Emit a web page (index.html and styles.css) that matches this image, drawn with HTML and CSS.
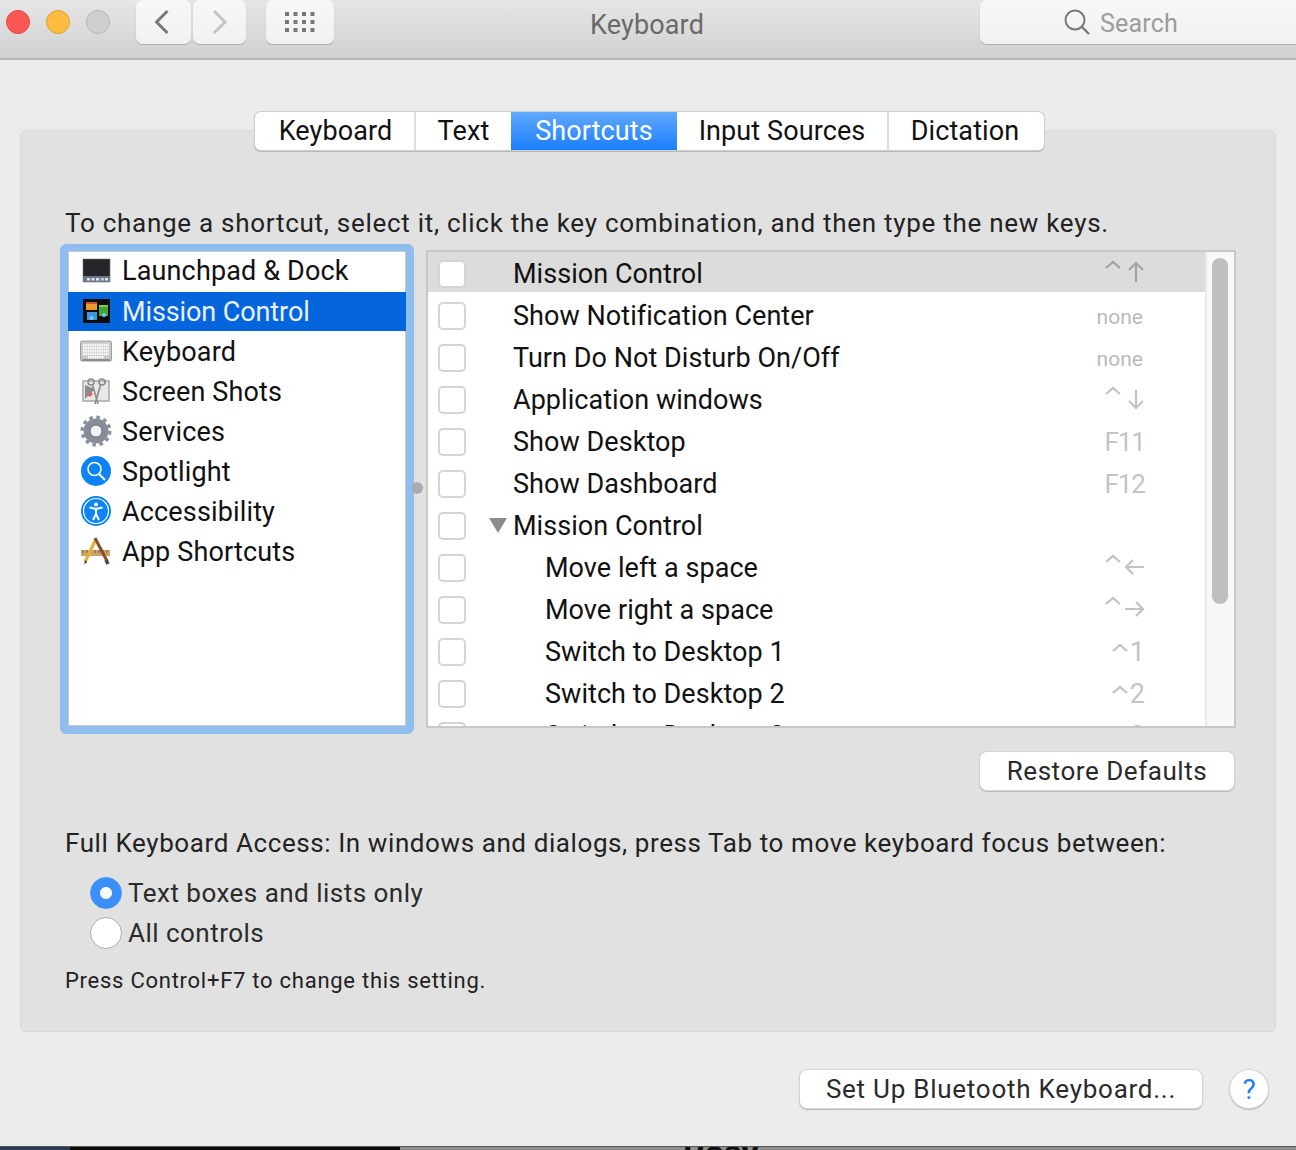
FILE: index.html
```html
<!DOCTYPE html>
<html lang="en">
<head>
<meta charset="utf-8">
<title>Keyboard</title>
<link rel="stylesheet" href="styles.css">
</head>
<body>
<div class="window">
  <header class="titlebar">
    <div class="lights">
      <span class="light red"></span><span class="light yellow"></span><span class="light grey"></span>
    </div>
    <div class="navgroup">
      <span class="tbtn nav"><svg width="18" height="26" viewBox="0 0 18 26"><path d="M12.500 2 1.500 13l11 11" fill="none" stroke="#777" stroke-width="3"/></svg></span>
      <span class="tbtn nav"><svg width="18" height="26" viewBox="0 0 18 26"><path d="M3 2l11 11L3 24" fill="none" stroke="#c4c4c4" stroke-width="3"/></svg></span>
    </div>
    <span class="tbtn grid-btn"><svg width="30" height="20" viewBox="0 0 30 20" fill="#777"><rect x="0" y="0" width="4" height="4"/><rect x="8.500" y="0" width="4" height="4"/><rect x="17" y="0" width="4" height="4"/><rect x="25.500" y="0" width="4" height="4"/><rect x="0" y="8" width="4" height="4"/><rect x="8.500" y="8" width="4" height="4"/><rect x="17" y="8" width="4" height="4"/><rect x="25.500" y="8" width="4" height="4"/><rect x="0" y="16" width="4" height="4"/><rect x="8.500" y="16" width="4" height="4"/><rect x="17" y="16" width="4" height="4"/><rect x="25.500" y="16" width="4" height="4"/></svg></span>
    <div class="title">Keyboard</div>
    <div class="search">
      <svg width="26" height="26" viewBox="0 0 26 26"><circle cx="11" cy="11" r="9.500" fill="none" stroke="#777" stroke-width="2"/><path d="M18 18l7 7" stroke="#777" stroke-width="2.400"/></svg>
      <span>Search</span>
    </div>
  </header>

  <main class="content">
    <nav class="tabs">
      <span class="tab t1">Keyboard</span><span class="tab t2">Text</span><span class="tab t3 active">Shortcuts</span><span class="tab t4">Input Sources</span><span class="tab t5">Dictation</span>
    </nav>
    <section class="panel">
      <p class="intro">To change a shortcut, select it, click the key combination, and then type the new keys.</p>
      <div class="columns">
        <div class="cats">
          <div class="cat">
            <svg class="ico" width="32" height="28" viewBox="0 0 32 28"><rect x="3" y="2" width="27" height="23" fill="#26262a" stroke="#777" stroke-width=".6"/><rect x="3" y="19" width="27" height="6" fill="#6d7783"/><g fill="#dde7f2"><rect x="7" y="21" width="3" height="2.500"/><rect x="11.500" y="21" width="3" height="2.500"/><rect x="16" y="21" width="3" height="2.500"/><rect x="20.500" y="21" width="3.500" height="2.500" fill="#a8cdf0"/><rect x="25" y="21" width="3" height="2.500"/></g></svg>
            <span>Launchpad &amp; Dock</span>
          </div>
          <div class="cat selected">
            <svg class="ico" width="32" height="28" viewBox="0 0 32 28"><rect x="3" y="1" width="27" height="24" fill="#0d0d0d"/><rect x="6" y="4" width="11" height="8" fill="#e89a2c"/><rect x="6" y="4" width="11" height="2" fill="#d24f2f"/><rect x="7" y="14" width="10" height="8" fill="#3d94e0"/><rect x="19" y="7" width="9" height="11" fill="#3fa63a"/><rect x="19" y="7" width="9" height="2" fill="#7ccb4d"/><circle cx="11.500" cy="20" r="2" fill="#7fc7f5"/><circle cx="24" cy="17" r="2" fill="#7fc7f5"/></svg>
            <span>Mission Control</span>
          </div>
          <div class="cat">
            <svg class="ico" width="32" height="28" viewBox="0 0 32 28"><rect x="0.500" y="4" width="31" height="20" rx="1.500" fill="#c9c9c9" stroke="#9d9d9d"/><rect x="2" y="22" width="28" height="2" fill="#8d8d8d"/><g stroke="#fafafa" stroke-width="2.500" stroke-dasharray="1.700 .6"><path d="M3 8h26M3 11h26M3 14h26M3 17h26"/><path d="M8 20.300h16"/></g></svg>
            <span>Keyboard</span>
          </div>
          <div class="cat">
            <svg class="ico" width="32" height="28" viewBox="0 0 32 28"><rect x="3" y="4" width="26" height="20" fill="#e8e8e8" stroke="#a8a8a8" stroke-width="1.500"/><path d="M5 22 15 12 5 8z" fill="#8c8c8c"/><path d="M7 18l4-3 2 2-3 3z" fill="#d36a5d"/><g fill="none" stroke="#8b8b8b" stroke-width="1.600"><circle cx="11" cy="5" r="3"/><circle cx="22" cy="5" r="3"/><path d="M12.500 8l5.500 19M20.500 8 15 27"/></g></svg>
            <span>Screen Shots</span>
          </div>
          <div class="cat">
            <svg class="ico" width="32" height="32" viewBox="0 0 32 32"><circle cx="16" cy="16" r="9" fill="none" stroke="#868d97" stroke-width="7"/><circle cx="16" cy="16" r="13" fill="none" stroke="#8b929c" stroke-width="5" stroke-dasharray="3.400 3.400"/><circle cx="16" cy="16" r="6" fill="#f2f2f2" stroke="#6a7079"/></svg>
            <span>Services</span>
          </div>
          <div class="cat">
            <svg class="ico" width="32" height="32" viewBox="0 0 32 32"><circle cx="16" cy="16" r="15" fill="#0d84f5"/><circle cx="14.500" cy="14" r="6.500" fill="none" stroke="#fff" stroke-width="1.500"/><path d="M19 19l6 6" stroke="#fff" stroke-width="2"/></svg>
            <span>Spotlight</span>
          </div>
          <div class="cat">
            <svg class="ico" width="32" height="32" viewBox="0 0 32 32"><circle cx="16" cy="16" r="15" fill="#0d84f5"/><circle cx="16" cy="16" r="12.500" fill="none" stroke="#fff" stroke-width="1.200"/><circle cx="16" cy="9.500" r="2" fill="#fff"/><path d="M9.500 12.500 16 14l6.500-1.500M16 14v5l-3 6M16 19l3 6" fill="none" stroke="#fff" stroke-width="2"/></svg>
            <span>Accessibility</span>
          </div>
          <div class="cat">
            <svg class="ico" width="32" height="32" viewBox="0 0 32 32"><rect x="1" y="15" width="29" height="6" fill="#c9a468"/><path d="M3 15v3M7 15v3M11 15v3M15 15v3M19 15v3M23 15v3M27 15v3" stroke="#7d6238"/><path d="M16 4 5 27" stroke="#e6ae3c" stroke-width="3.200"/><path d="M5.500 25l-1.500 4 3-1.500z" fill="#333"/><path d="M15 3l12 23" stroke="#8a4b33" stroke-width="3"/><path d="M26 25l2 4" stroke="#444" stroke-width="3.500"/></svg>
            <span>App Shortcuts</span>
          </div>
        </div>
        <span class="divider-knob"></span>
        <div class="table">
          <div class="rows">
            <div class="row hl"><span class="check"></span><span class="disc"></span><span class="label">Mission Control</span><span class="keys"><svg class="arrows" width="40" height="24" viewBox="0 0 40 24"><path d="M1 8l7-6 7 6M31 22V4M24 10l7-7 7 7" fill="none" stroke="#a3a3a3" stroke-width="2.200"/></svg></span></div>
            <div class="row"><span class="check"></span><span class="disc"></span><span class="label">Show Notification Center</span><span class="keys small">none</span></div>
            <div class="row"><span class="check"></span><span class="disc"></span><span class="label">Turn Do Not Disturb On/Off</span><span class="keys small">none</span></div>
            <div class="row"><span class="check"></span><span class="disc"></span><span class="label">Application windows</span><span class="keys"><svg class="arrows" width="40" height="24" viewBox="0 0 40 24"><path d="M1 8l7-6 7 6M31 4v18M24 15l7 7 7-7" fill="none" stroke="#c2c2c2" stroke-width="2.200"/></svg></span></div>
            <div class="row"><span class="check"></span><span class="disc"></span><span class="label">Show Desktop</span><span class="keys fn">F11</span></div>
            <div class="row"><span class="check"></span><span class="disc"></span><span class="label">Show Dashboard</span><span class="keys fn">F12</span></div>
            <div class="row"><span class="check"></span><span class="disc"><svg width="18" height="15" viewBox="0 0 18 15"><path d="M0 0h18L9 15z" fill="#8b8b8b"/></svg></span><span class="label">Mission Control</span><span class="keys"></span></div>
            <div class="row sub"><span class="check"></span><span class="disc"></span><span class="label">Move left a space</span><span class="keys"><svg class="arrows" width="40" height="24" viewBox="0 0 40 24"><path d="M1 8l7-6 7 6M21 13h18M28 6l-7 7 7 7" fill="none" stroke="#c2c2c2" stroke-width="2.200"/></svg></span></div>
            <div class="row sub"><span class="check"></span><span class="disc"></span><span class="label">Move right a space</span><span class="keys"><svg class="arrows" width="40" height="24" viewBox="0 0 40 24"><path d="M1 8l7-6 7 6M20 13h18M31 6l7 7-7 7" fill="none" stroke="#c2c2c2" stroke-width="2.200"/></svg></span></div>
            <div class="row sub"><span class="check"></span><span class="disc"></span><span class="label">Switch to Desktop 1</span><span class="keys"><svg class="caret" width="16" height="10" viewBox="0 0 16 10"><path d="M1 8l7-6 7 6" fill="none" stroke="#c2c2c2" stroke-width="2.200"/></svg>1</span></div>
            <div class="row sub"><span class="check"></span><span class="disc"></span><span class="label">Switch to Desktop 2</span><span class="keys"><svg class="caret" width="16" height="10" viewBox="0 0 16 10"><path d="M1 8l7-6 7 6" fill="none" stroke="#c2c2c2" stroke-width="2.200"/></svg>2</span></div>
            <div class="row sub"><span class="check"></span><span class="disc"></span><span class="label">Switch to Desktop 3</span><span class="keys"><svg class="caret" width="16" height="10" viewBox="0 0 16 10"><path d="M1 8l7-6 7 6" fill="none" stroke="#c2c2c2" stroke-width="2.200"/></svg>3</span></div>
          </div>
          <div class="track"><div class="thumb"></div></div>
        </div>
      </div>
      <div class="restore-row"><span class="btn restore">Restore Defaults</span></div>
      <p class="fka">Full Keyboard Access: In windows and dialogs, press Tab to move keyboard focus between:</p>
      <div class="radios">
        <div class="radio-row"><span class="radio on"></span><span>Text boxes and lists only</span></div>
        <div class="radio-row"><span class="radio"></span><span>All controls</span></div>
      </div>
      <p class="hint">Press Control+F7 to change this setting.</p>
    </section>
    <div class="footer">
      <span class="btn bt">Set Up Bluetooth Keyboard...</span>
      <span class="help">?</span>
    </div>
  </main>
  <div class="behind"><span>Rosy</span></div>
</div>
</body>
</html>
```

FILE: styles.css
```css
* { box-sizing: border-box; }
html, body { margin: 0; padding: 0; }
body { width: 1296px; height: 1150px; overflow: hidden; font-family: Roboto, "Liberation Sans", sans-serif; color: #111; background: #ececec; }
.window { width: 1296px; height: 1150px; display: flex; flex-direction: column; overflow: hidden; }

.titlebar { height: 60px; flex: none; display: flex; align-items: flex-start; background: linear-gradient(#e7e6e7, #d2d1d2); border-bottom: 2px solid #b4b4b4; position: relative; }
.lights { display: flex; gap: 16px; padding: 10px 0 0 6px; width: 136px; }
.light { width: 24px; height: 24px; border-radius: 50%; border: 1px solid; }
.red { background: #fc5753; border-color: #df4744; }
.yellow { background: #fdbc40; border-color: #de9f34; }
.grey { background: #cfcfcf; border-color: #b5b5b5; }
.tbtn { display: flex; align-items: center; justify-content: center; height: 44px; background: linear-gradient(#f8f8f8, #f1f1f1); border-radius: 7px; box-shadow: 0 1px 1px #a9a9a9; }
.navgroup { display: flex; gap: 2px; }
.nav { width: 55px; }
.nav + .nav { width: 53px; }
.grid-btn { width: 68px; margin-left: 20px; }
.title { position: absolute; left: 0; right: 0; top: 9px; text-align: center; font-size: 27px; letter-spacing: .15px; line-height: 32px; color: #6a6a6a; padding-right: 2px; pointer-events: none; }
.search { margin-left: auto; width: 316px; height: 44px; display: flex; align-items: center; gap: 10px; padding-left: 84px; font-size: 25px; letter-spacing: .2px; color: #9c9c9c; background: linear-gradient(#f8f8f8, #f1f1f1); border-radius: 7px 0 0 7px; box-shadow: 0 1px 1px #a9a9a9; }
.search span { padding-top: 2px; }

.content { flex: 1; display: flex; flex-direction: column; padding: 52px 20px 0; }
.tabs { display: flex; align-self: flex-start; margin-left: 235px; height: 38px; margin-bottom: -20px; position: relative; z-index: 1; background: #fff; border-radius: 6px; box-shadow: 0 0 0 1px #cfcfcf, 0 1px 1px 1px #b5b5b5; font-size: 27px; letter-spacing: .1px; overflow: hidden; }
.tab { display: flex; align-items: center; justify-content: center; border-right: 2px solid #dedede; color: #111; }
.t1 { width: 161px; padding-left: 2px; }
.t2 { width: 95px; border-right: 0; }
.t3 { width: 166px; border-right: 0; }
.t4 { width: 212px; }
.t5 { width: 155px; border-right: 0; padding-right: 3px; }
.active { background: linear-gradient(#62a8fe, #1a7efb); color: #fff; }

.panel { height: 902px; flex: none; background: #e1e1e1; border: 1px solid #d9d9d9; border-radius: 6px; padding: 0 40px 0 39px; display: flex; flex-direction: column; }
p { margin: 0; }
.intro { font-size: 26px; letter-spacing: .72px; line-height: 32px; margin: 76px 0 0 5px; color: #222; white-space: nowrap; }
.columns { display: flex; align-items: flex-start; margin-top: 5px; height: 490px; position: relative; }
.cats { width: 354px; height: 490px; flex: none; background: #fff; border: 7px solid #8fbdee; border-width: 7px 8px 8px; border-radius: 6px; box-shadow: inset 0 0 0 1px #c9c9c9; display: flex; flex-direction: column; }
.cat { height: 40px; display: flex; align-items: center; gap: 10px; padding-left: 12px; font-size: 27px; letter-spacing: .15px; color: #111; flex: none; }
.cat.selected { height: 39px; margin-top: 1px; letter-spacing: -.1px; }
.cat span { line-height: 40px; padding-top: 2px; }
.cat:first-child span, .cat.selected span { padding-top: 0; }
.ico { flex: none; width: 32px; }
.selected { background: #0565dd; color: #e8f1fc; }
.divider-knob { position: absolute; left: 351px; top: 238px; width: 12px; height: 12px; border-radius: 50%; background: #a8acb0; }
.table { margin: 6px 0 0 12px; width: 810px; height: 478px; display: flex; background: #fff; border: 2px solid #c8c8c8; overflow: hidden; flex: none; }
.rows { width: 777px; flex: none; }
.row { height: 42px; display: grid; grid-template-columns: 51px 24px 1fr auto; align-items: center; padding: 0 60px 0 10px; font-size: 27px; letter-spacing: .05px; color: #111; }
.row.hl { height: 40px; margin-bottom: 2px; background: #dcdcdc; }
.check { width: 28px; height: 28px; background: #fff; border: 2px solid #d4d4d4; border-radius: 5px; }
.disc { display: flex; }
.sub .label { padding-left: 32px; }
.label { white-space: nowrap; line-height: 42px; padding-top: 1px; }
.keys { color: #c4c4c4; display: flex; align-items: center; justify-content: flex-end; }
.fn { font-size: 26px; letter-spacing: -1px; }
.small { font-size: 21px; color: #b9b9b9; padding-top: 2px; padding-right: 2px; }
.arrows { margin-top: -3px; }
.caret { margin-right: 2px; margin-bottom: 8px; }
.track { width: 29px; flex: none; background: #f8f8f8; border-left: 2px solid #e8e8e8; padding: 6px 0 0 5px; }
.thumb { width: 16px; height: 346px; border-radius: 8px; background: #bfbfbf; }

.restore-row { display: flex; justify-content: flex-end; margin: 18px 1px 0 0; }
.btn { display: flex; align-items: center; justify-content: center; background: #fff; border-radius: 7px; box-shadow: 0 0 0 1px #d4d4d4, 0 1px 1px 1px #b9b9b9; color: #2a2a2a; font-size: 26px; height: 38px; }
.restore { width: 254px; letter-spacing: .55px; }
.fka { font-size: 26px; letter-spacing: .59px; line-height: 32px; margin: 37px 0 0 5px; color: #222; white-space: nowrap; }
.radios { display: flex; flex-direction: column; margin: 14px 0 0 30px; }
.radio-row { height: 40px; display: flex; align-items: center; gap: 6px; font-size: 26px; letter-spacing: .48px; color: #2a2a2a; }
.radio { width: 32px; height: 32px; border-radius: 50%; background: #fff; border: 1px solid #adadad; flex: none; }
.radio.on { background: radial-gradient(circle, #fff 0 5.500px, #3a90f8 6.500px); border-color: #3d94fa; }
.hint { font-size: 22px; letter-spacing: .74px; line-height: 28px; margin: 14px 0 0 5px; color: #222; }

.footer { display: flex; justify-content: flex-end; align-items: flex-start; padding-top: 38px; gap: 28px; padding-right: 8px; flex: 1; }
.bt { width: 402px; letter-spacing: .75px; }
.help { width: 38px; height: 38px; border-radius: 50%; background: #fff; box-shadow: 0 0 0 1px #d4d4d4, 0 1px 1px 1px #b9b9b9; color: #1a80f5; font-size: 28px; display: flex; align-items: center; justify-content: center; }
.behind { height: 4px; flex: none; background: linear-gradient(90deg, #2a3d52 0 70px, #0a0a0a 70px 400px, #8f8f8f 400px); border-top: 1px solid #555; overflow: hidden; position: relative; }
.behind span { position: absolute; left: 683px; top: -12px; font-size: 34px; line-height: 34px; font-weight: 700; color: #111; }
```
